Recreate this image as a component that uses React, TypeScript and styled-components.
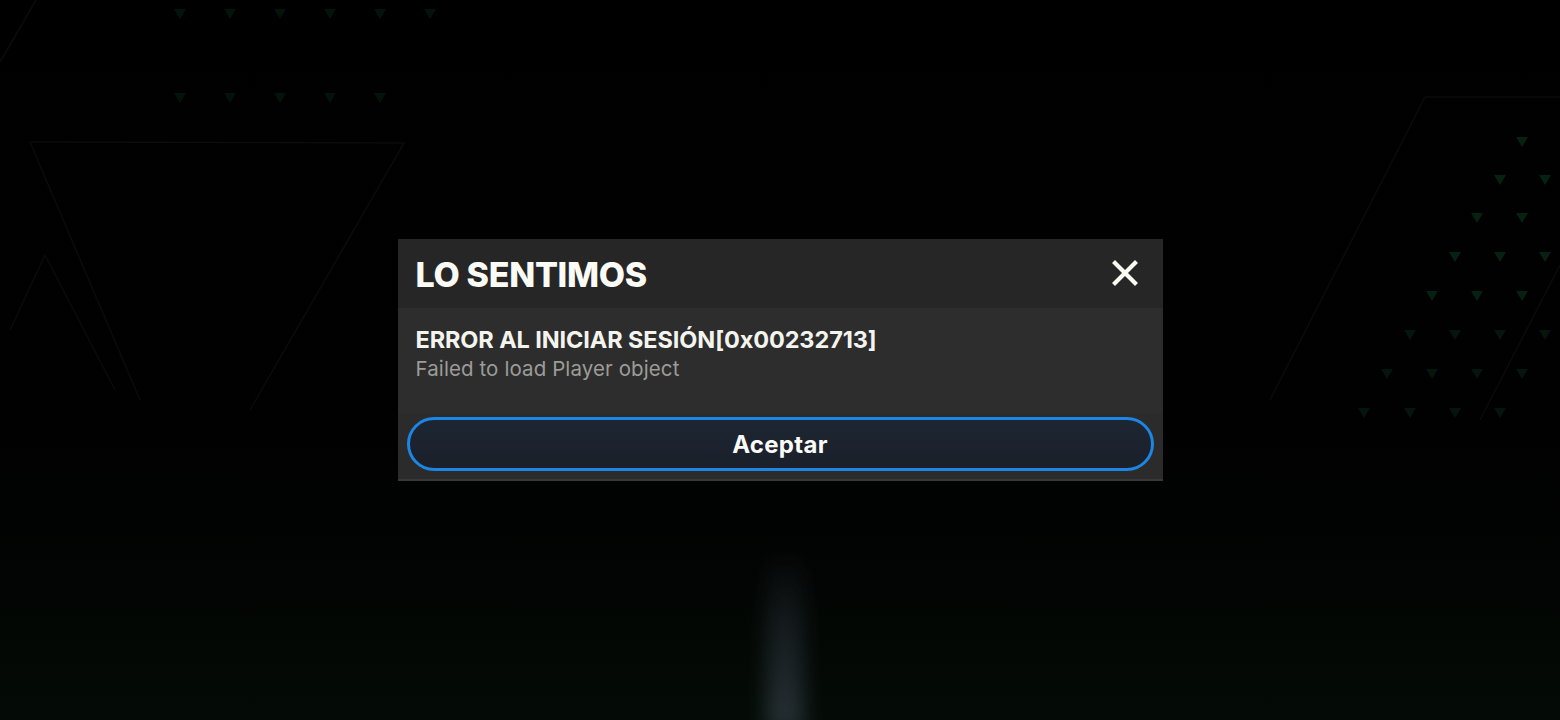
import React from "react";
import styled, { createGlobalStyle } from "styled-components";

const GlobalStyle = createGlobalStyle`
  html, body {
    margin: 0;
    padding: 0;
    background: #000;
  }
  * {
    box-sizing: border-box;
  }
`;

const Screen = styled.div`
  position: relative;
  width: 100vw;
  height: 100vh;
  overflow: hidden;
  display: flex;
  align-items: center;
  justify-content: center;
  background: linear-gradient(
    180deg,
    #000000 0%,
    #010101 60%,
    #020503 82%,
    #040b06 100%
  );
  font-family: Inter, "Noto Sans", sans-serif;
`;

const Backdrop = styled.svg`
  position: absolute;
  inset: 0;
  width: 100%;
  height: 100%;
  pointer-events: none;
`;

const Dialog = styled.div`
  position: relative;
  width: 765px;
  display: flex;
  flex-direction: column;
  background: #2d2d2d;
`;

const Header = styled.div`
  height: 69px;
  display: flex;
  align-items: center;
  justify-content: space-between;
  padding: 0 24px 0 18px;
  background: #262626;
`;

const Title = styled.h1`
  margin: 0;
  padding-top: 1px;
  font-size: 34px;
  font-weight: 800;
  letter-spacing: -0.3px;
  color: #fbfbf5;
`;

const CloseButton = styled.button`
  width: 28px;
  height: 28px;
  margin-top: -2px;
  padding: 0;
  border: none;
  background: none;
  display: flex;
  align-items: center;
  justify-content: center;
  cursor: pointer;
`;

const Body = styled.div`
  padding: 18px 18px 31px;
  display: flex;
  flex-direction: column;
  gap: 2px;
`;

const ErrorCode = styled.div`
  font-size: 23.5px;
  font-weight: 700;
  letter-spacing: -0.1px;
  line-height: 28px;
  color: #f4f4ef;
`;

const Message = styled.div`
  font-size: 20.5px;
  font-weight: 400;
  letter-spacing: 0.1px;
  line-height: 26px;
  color: #9c9c98;
`;

const Footer = styled.div`
  padding: 4px 9px 8px;
  background: #2b2b2b;
  border-bottom: 2px solid #383838;
`;

const AcceptButton = styled.button`
  display: block;
  width: 100%;
  height: 54px;
  border: 3px solid #1c86e2;
  border-radius: 27px;
  background: linear-gradient(180deg, #1d2633 0%, #1b202a 100%);
  color: #fafaf7;
  font-family: Inter, "Noto Sans", sans-serif;
  font-size: 24px;
  font-weight: 700;
  letter-spacing: 0.3px;
  cursor: pointer;
`;

const smallTris: [number, number][] = [];
[180, 230, 280, 330, 380, 430].forEach((x) => smallTris.push([x, 14]));
[180, 230, 280, 330, 380].forEach((x) => smallTris.push([x, 98]));
// right cluster
const rightRows: [number, number[]][] = [
  [142, [1522]],
  [180, [1500, 1545]],
  [218, [1477, 1522]],
  [257, [1455, 1500, 1545]],
  [296, [1432, 1477, 1522]],
  [335, [1410, 1455, 1500, 1545]],
  [374, [1387, 1432, 1477, 1522]],
  [413, [1364, 1410, 1455, 1500]],
];
rightRows.forEach(([y, xs]) => xs.forEach((x) => smallTris.push([x, y])));

const Background = () => (
  <Backdrop viewBox="0 0 1560 720" preserveAspectRatio="none">
    <defs>
      <linearGradient id="beam" x1="0" y1="0" x2="0" y2="1">
        <stop offset="0" stopColor="#5a6a80" stopOpacity="0" />
        <stop offset="0.4" stopColor="#5a6a80" stopOpacity="0.2" />
        <stop offset="1" stopColor="#6a7a90" stopOpacity="0.35" />
      </linearGradient>
      <filter id="blur" x="-80%" y="-10%" width="260%" height="120%">
        <feGaussianBlur stdDeviation="10" />
      </filter>
    </defs>
    <rect x="766" y="550" width="38" height="180" fill="url(#beam)" filter="url(#blur)" />
    <g fill="none" stroke="#090c0a" strokeWidth="1.5">
      <polyline points="30,142 404,143 250,410" />
      <line x1="30" y1="142" x2="140" y2="400" />
      <line x1="0" y1="62" x2="36" y2="0" />
      <line x1="45" y1="255" x2="10" y2="330" />
      <line x1="45" y1="255" x2="115" y2="390" />
      <line x1="1425" y1="97" x2="1270" y2="400" />
      <line x1="1425" y1="97" x2="1560" y2="97" />
      <line x1="1560" y1="265" x2="1480" y2="420" />
    </g>
    <g fill="#062514">
      {smallTris.map(([x, y], i) => (
        <polygon
          key={i}
          points={`${x - 6},${y - 5} ${x + 6},${y - 5} ${x},${y + 5}`}
          opacity={y < 120 ? 0.5 : y > 300 ? 0.6 : 0.9}
        />
      ))}
    </g>
  </Backdrop>
);

export default function App() {
  return (
    <>
      <GlobalStyle />
      <Screen>
        <Background />
        <Dialog>
          <Header>
            <Title>LO SENTIMOS</Title>
            <CloseButton aria-label="Cerrar">
              <svg width="26" height="26" viewBox="0 0 26 26">
                <path d="M3 3 L23 23 M23 3 L3 23" stroke="#fbfbf5" strokeWidth="4.2" strokeLinecap="square" />
              </svg>
            </CloseButton>
          </Header>
          <Body>
            <ErrorCode>ERROR AL INICIAR SESIÓN[0x00232713]</ErrorCode>
            <Message>Failed to load Player object</Message>
          </Body>
          <Footer>
            <AcceptButton>Aceptar</AcceptButton>
          </Footer>
        </Dialog>
      </Screen>
    </>
  );
}
